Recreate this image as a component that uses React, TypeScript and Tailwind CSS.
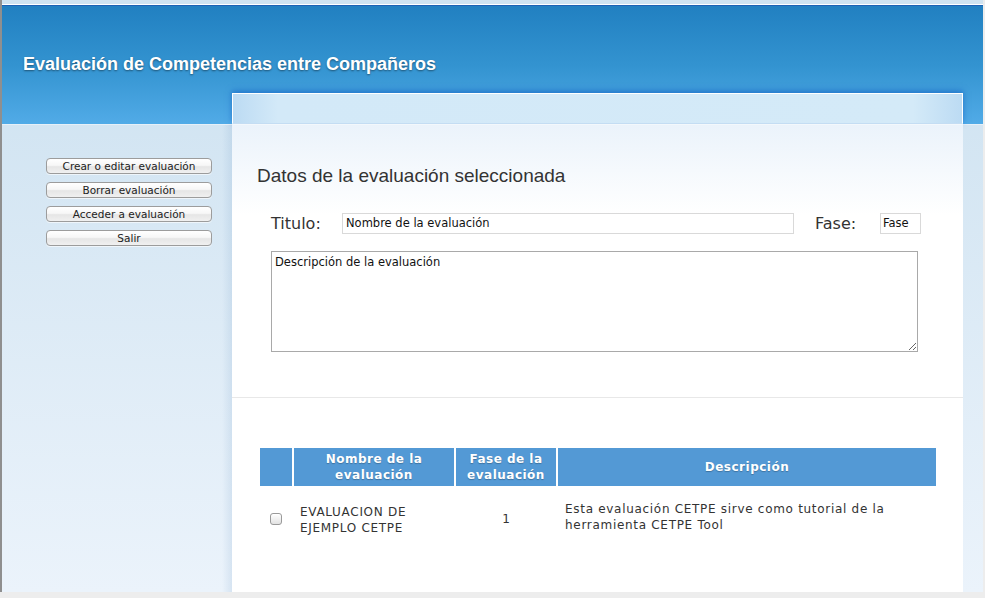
import React from "react";

const dv = { fontFamily: '"DejaVu Sans", Verdana, sans-serif' };
const lib = { fontFamily: '"Liberation Sans", Arial, sans-serif' };

function SideButton({ label }: { label: string }) {
  return (
    <button
      className="w-[166px] h-[16px] rounded-[4px] border border-[#9c9c9c] bg-[linear-gradient(to_bottom,#ffffff,#f7f7f7_45%,#e6e6e6_55%,#f0f0f0)] text-[10.5px] leading-[14px] text-[#222] flex items-center justify-center shadow-[0_1px_0_rgba(255,255,255,0.6)]"
      style={dv}
    >
      {label}
    </button>
  );
}

export default function App() {
  return (
    <div className="w-[985px] h-[598px] bg-[#ededed] overflow-hidden">
      <div className="w-[983px] h-[592px] border-l-2 border-[#8f8f8f] flex flex-col bg-[linear-gradient(to_bottom,#cce1f0,#ebf3fb)]">
        <div className="h-[4px] bg-[#cfe3f1]" />
        <div className="h-[1px] bg-white" />
        <header className="h-[119px] border-t border-[#1c62b5] bg-[linear-gradient(to_bottom,#2180c1,#3393d0_50%,#51abe7)] pt-[47px] pl-[21px]">
          <h1
            className="text-[18px] leading-[22px] font-bold text-white [text-shadow:0_1px_2px_rgba(0,0,0,0.45)]"
            style={lib}
          >
            Evaluación de Competencias entre Compañeros
          </h1>
        </header>
        <div className="h-[1px] bg-[#e6f0f8]" />
        <div className="flex flex-1 min-h-0">
          <aside className="w-[230px] shrink-0 pt-[33px] pl-[44px] flex flex-col gap-[8px] bg-[linear-gradient(to_right,transparent_220px,rgba(120,160,200,0.18))]">
            <SideButton label="Crear o editar evaluación" />
            <SideButton label="Borrar evaluación" />
            <SideButton label="Acceder a evaluación" />
            <SideButton label="Salir" />
          </aside>
          <main className="w-[731px] shrink-0 -mt-[32px] relative z-10 flex flex-col bg-white">
            <div className="h-[31px] border-t border-x border-white bg-[linear-gradient(to_right,#bcdbf3,#d3e9f8_45px,#d4eaf8_680px,#bcdbf3)] border-b border-b-[#c4ddf3] shadow-[0_-2px_6px_rgba(10,80,190,0.55)]" />
            <div className="h-[1px] bg-[#f3f8fc]" />
            <div className="flex-1 flex flex-col bg-[linear-gradient(to_bottom,#ebf3fb,#ffffff_90px)]">
              <h2
                className="pt-[39px] pl-[25px] text-[19px] leading-[23px] text-[#333]"
                style={lib}
              >
                Datos de la evaluación seleccionada
              </h2>
              <div className="mt-[26px] pl-[39px] flex items-center h-[21px]" style={dv}>
                <span className="w-[71px] text-[16px] leading-[20px] text-[#333]">Titulo:</span>
                <div className="w-[452px] h-[21px] border border-[#d9d9d9] bg-white pl-[3px] flex items-center text-[11.5px] text-[#111]">
                  Nombre de la evaluación
                </div>
                <span className="ml-[21px] w-[65px] text-[16px] leading-[20px] text-[#333]">Fase:</span>
                <div className="w-[41px] h-[21px] border border-[#d9d9d9] bg-white pl-[2px] flex items-center text-[11.5px] text-[#111]">
                  Fase
                </div>
              </div>
              <div className="mt-[17px] pl-[39px]">
                <textarea
                  readOnly
                  defaultValue="Descripción de la evaluación"
                  className="block w-[647px] h-[101px] border border-[#a9a9a9] bg-white px-[3px] py-[3px] text-[11.5px] leading-[14px] text-[#111] outline-none"
                  style={dv}
                />
              </div>
              <div className="mt-[45px] h-[1px] bg-[#e8e8e8]" />
              <div className="mt-[50px] pl-[28px]" style={dv}>
                <div className="grid grid-cols-[32px_160px_100px_378px] gap-x-[2px]">
                  <div className="h-[38px] bg-[#5399d5]" />
                  <div className="h-[38px] bg-[#5399d5] flex items-center justify-center text-center text-white font-bold text-[12px] leading-[16px] tracking-[0.5px] [text-shadow:0_1px_1px_rgba(0,0,0,0.25)]">
                    <span>
                      Nombre de la
                      <br />
                      evaluación
                    </span>
                  </div>
                  <div className="h-[38px] bg-[#5399d5] flex items-center justify-center text-center text-white font-bold text-[12px] leading-[16px] tracking-[0.5px] [text-shadow:0_1px_1px_rgba(0,0,0,0.25)]">
                    <span>
                      Fase de la
                      <br />
                      evaluación
                    </span>
                  </div>
                  <div className="h-[38px] bg-[#5399d5] flex items-center justify-center text-center text-white font-bold text-[12px] leading-[16px] tracking-[0.5px] [text-shadow:0_1px_1px_rgba(0,0,0,0.25)]">
                    Descripción
                  </div>
                  <div className="h-[64px] flex items-center justify-center">
                    <span className="w-[12px] h-[12px] rounded-[3px] border border-[#9a9a9a] bg-[linear-gradient(to_bottom,#ffffff,#e2e2e2)] shadow-[inset_0_1px_0_rgba(255,255,255,0.8)] mt-[1px]" />
                  </div>
                  <div className="h-[64px] flex items-center pl-[6px] text-[12px] leading-[16px] tracking-[0.7px] text-[#333]">
                    <span className="mt-[4px]">
                      EVALUACION DE
                      <br />
                      EJEMPLO CETPE
                    </span>
                  </div>
                  <div className="h-[64px] flex items-center justify-center text-[12px] leading-[16px] text-[#333]">
                    <span className="mt-[1px]">1</span>
                  </div>
                  <div className="h-[64px] flex items-center pl-[7px] text-[12px] leading-[16px] tracking-[0.7px] text-[#333]">
                    <span className="-mt-[3px]">
                      Esta evaluación CETPE sirve como tutorial de la
                      <br />
                      herramienta CETPE Tool
                    </span>
                  </div>
                </div>
              </div>
            </div>
          </main>
          <div className="flex-1" />
        </div>
      </div>
    </div>
  );
}
